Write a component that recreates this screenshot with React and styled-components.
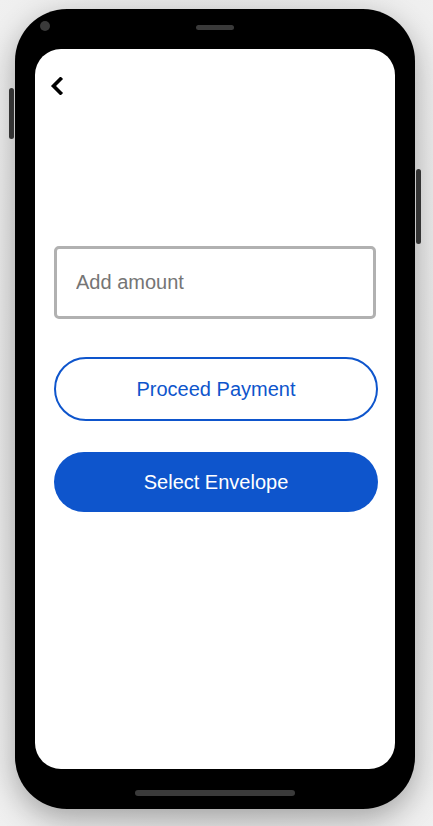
import styled, { createGlobalStyle } from "styled-components";

const GlobalStyle = createGlobalStyle`
  html, body {
    margin: 0;
    padding: 0;
    background: #ffffff;
    font-family: "Liberation Sans", Arial, sans-serif;
  }
`;

const App = () => {
  return (
    <>
      <GlobalStyle />
      <Page>
        <Phone>
          <Camera />
          <Speaker />
          <SideButton side="left" top={79} height={51} />
          <SideButton side="right" top={160} height={75} />

          <Screen>
            <Header>
              <BackButton aria-label="Back">
                <svg width="14" height="18" viewBox="0 0 14 18">
                  <path
                    d="M10.5 2 L3.5 9 L10.5 16"
                    fill="none"
                    stroke="#000"
                    strokeWidth="3.6"
                    strokeLinecap="square"
                  />
                </svg>
              </BackButton>
            </Header>

            <Form>
              <AmountInput placeholder="Add amount" />
              <OutlineButton>Proceed Payment</OutlineButton>
              <FilledButton>Select Envelope</FilledButton>
            </Form>
          </Screen>

          <HomeBar />
        </Phone>
      </Page>
    </>
  );
};

export default App;

//
// phone shell
//

const Page = styled.div`
  width: 433px;
  height: 826px;
  padding: 9px 0 0 15px;
  box-sizing: border-box;
  background: radial-gradient(ellipse at center, #d8d8d8 0%, #e6e6e6 60%, #f0f0f0 100%);
  overflow: hidden;
`;

const Phone = styled.div`
  position: relative;
  width: 400px;
  height: 800px;
  box-sizing: border-box;
  padding: 40px 20px;
  background: #000;
  border-radius: 52px;
  box-shadow: 0 10px 30px rgba(0, 0, 0, 0.3);
`;

const Camera = styled.div`
  position: absolute;
  top: 12px;
  left: 25px;
  width: 10px;
  height: 10px;
  border-radius: 50%;
  background: #3a3a3a;
`;

const Speaker = styled.div`
  position: absolute;
  top: 16px;
  left: 181px;
  width: 38px;
  height: 5px;
  border-radius: 3px;
  background: #3a3a3a;
`;

const SideButton = styled.div`
  position: absolute;
  top: ${(p) => p.top}px;
  ${(p) => (p.side === "left" ? "left: -6px;" : "right: -6px;")}
  width: 5px;
  height: ${(p) => p.height}px;
  border-radius: 3px;
  background: #333;
`;

const HomeBar = styled.div`
  position: absolute;
  bottom: 13px;
  left: 120px;
  width: 160px;
  height: 6px;
  border-radius: 3px;
  background: #3a3a3a;
`;

const Screen = styled.div`
  width: 360px;
  height: 720px;
  box-sizing: border-box;
  padding: 0 17px 0 19px;
  background: #fff;
  border-radius: 26px;
  overflow: hidden;
  display: flex;
  flex-direction: column;
`;

//
// content
//

const Header = styled.div`
  padding-top: 28px;
  height: 18px;
  display: flex;
  align-items: center;
`;

const BackButton = styled.button`
  margin-left: -4px;
  padding: 0;
  border: none;
  background: none;
  display: flex;
  cursor: pointer;
`;

const Form = styled.div`
  margin-top: 151px;
  display: flex;
  flex-direction: column;
`;

const AmountInput = styled.input`
  width: 322px;
  height: 73px;
  box-sizing: border-box;
  border: 3px solid #b1b1b1;
  border-radius: 5px;
  padding: 0 19px;
  font-family: "Liberation Sans", Arial, sans-serif;
  font-size: 20px;
  color: #333;
  outline: none;

  &::placeholder {
    color: #757575;
  }
`;

const BaseButton = styled.button`
  width: 324px;
  box-sizing: border-box;
  font-family: "Liberation Sans", Arial, sans-serif;
  font-size: 20px;
  cursor: pointer;
  display: flex;
  align-items: center;
  justify-content: center;
`;

const OutlineButton = styled(BaseButton)`
  margin-top: 38px;
  height: 64px;
  border: 2px solid #0e55cc;
  border-radius: 32px;
  background: #fff;
  color: #0e55cc;
`;

const FilledButton = styled(BaseButton)`
  margin-top: 31px;
  height: 60px;
  border: none;
  border-radius: 30px;
  background: #0e55cc;
  color: #fff;
`;
